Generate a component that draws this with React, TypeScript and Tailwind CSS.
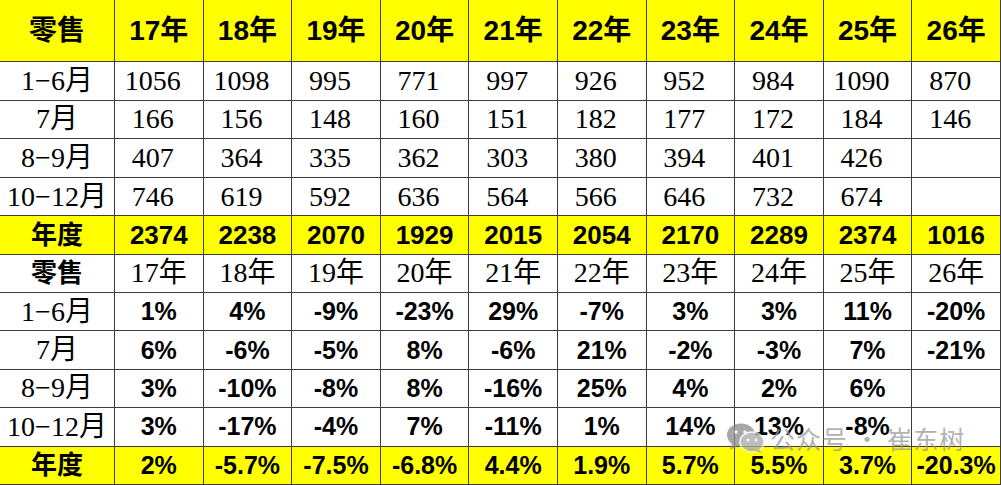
import React from 'react'

const years = ['17年', '18年', '19年', '20年', '21年', '22年', '23年', '24年', '25年', '26年']

const retail = [
  { label: '1−6月', values: ['1056', '1098', '995', '771', '997', '926', '952', '984', '1090', '870'] },
  { label: '7月', values: ['166', '156', '148', '160', '151', '182', '177', '172', '184', '146'] },
  { label: '8−9月', values: ['407', '364', '335', '362', '303', '380', '394', '401', '426', ''] },
  { label: '10−12月', values: ['746', '619', '592', '636', '564', '566', '646', '732', '674', ''] },
]
const retailTotal = ['2374', '2238', '2070', '1929', '2015', '2054', '2170', '2289', '2374', '1016']

const growth = [
  { label: '1−6月', values: ['1%', '4%', '-9%', '-23%', '29%', '-7%', '3%', '3%', '11%', '-20%'] },
  { label: '7月', values: ['6%', '-6%', '-5%', '8%', '-6%', '21%', '-2%', '-3%', '7%', '-21%'] },
  { label: '8−9月', values: ['3%', '-10%', '-8%', '8%', '-16%', '25%', '4%', '2%', '6%', ''] },
  { label: '10−12月', values: ['3%', '-17%', '-4%', '7%', '-11%', '1%', '14%', '13%', '-8%', ''] },
]
const growthTotal = ['2%', '-5.7%', '-7.5%', '-6.8%', '4.4%', '1.9%', '5.7%', '5.5%', '3.7%', '-20.3%']

const sans = "font-['Liberation_Sans','Noto_Sans_CJK_SC',sans-serif] font-bold"
const serif = "font-['Liberation_Serif','Noto_Sans_CJK_SC',serif]"
const cell = 'border border-[#3c3c3c] text-center align-middle p-0 whitespace-nowrap leading-none'

function WeChatMark() {
  return (
    <svg width="40" height="30" viewBox="0 0 40 30" className="shrink-0">
      <ellipse cx="15" cy="12" rx="14" ry="11.5" fill="#8a8a8a" />
      <path d="M6 21 L4 27 L11 23 Z" fill="#8a8a8a" />
      <ellipse cx="26" cy="19" rx="12" ry="10" fill="#a8a8a8" stroke="#f4f4f4" strokeWidth="1.5" />
      <path d="M33 26 L36 30 L29 28 Z" fill="#a8a8a8" />
      <circle cx="10" cy="9" r="1.8" fill="#f4f4f4" />
      <circle cx="19" cy="9" r="1.8" fill="#f4f4f4" />
      <circle cx="22" cy="17" r="1.5" fill="#f4f4f4" />
      <circle cx="30" cy="17" r="1.5" fill="#f4f4f4" />
    </svg>
  )
}

export default function App() {
  return (
    <div className="relative w-[1001px] h-[485px] overflow-hidden bg-white text-black">
      <table className="table-fixed border-collapse w-[1001px] -mt-px -ml-px">
        <colgroup>
          <col className="w-[115px]" />
          {years.map((y) => (
            <col key={y} className="w-[88.6px]" />
          ))}
        </colgroup>
        <tbody>
          {/* Header row */}
          <tr className="h-[62px] bg-[#ffff00]">
            <td className={`${cell} ${sans} text-[28px]`}>零售</td>
            {years.map((y) => (
              <td key={y} className={`${cell} ${sans} text-[28px]`}>{y}</td>
            ))}
          </tr>

          {/* Retail volumes */}
          {retail.map((row) => (
            <tr key={row.label} className="h-[38.6px] bg-white">
              <td className={`${cell} ${serif} text-[28px]`}>{row.label}</td>
              {row.values.map((v, i) => (
                <td key={i} className={`${cell} ${serif} text-[28px] pr-3`}>{v}</td>
              ))}
            </tr>
          ))}
          <tr className="h-[38.6px] bg-[#ffff00]">
            <td className={`${cell} ${sans} text-[26px]`}>年度</td>
            {retailTotal.map((v, i) => (
              <td key={i} className={`${cell} ${sans} text-[26px]`}>{v}</td>
            ))}
          </tr>

          {/* Growth header */}
          <tr className="h-[38px] bg-white">
            <td className={`${cell} ${sans} text-[26px]`}>零售</td>
            {years.map((y) => (
              <td key={y} className={`${cell} ${serif} text-[28px]`}>{y}</td>
            ))}
          </tr>

          {/* Growth rates */}
          {growth.map((row) => (
            <tr key={row.label} className="h-[38.4px] bg-white">
              <td className={`${cell} ${serif} text-[28px]`}>{row.label}</td>
              {row.values.map((v, i) => (
                <td key={i} className={`${cell} ${sans} text-[25px]`}>{v}</td>
              ))}
            </tr>
          ))}
          <tr className="h-[38.4px] bg-[#ffff00]">
            <td className={`${cell} ${sans} text-[26px]`}>年度</td>
            {growthTotal.map((v, i) => (
              <td key={i} className={`${cell} ${sans} text-[25px]`}>{v}</td>
            ))}
          </tr>
        </tbody>
      </table>

      {/* Watermark */}
      <div className="absolute left-[726px] top-[423px] flex items-center gap-1 opacity-75 pointer-events-none">
        <WeChatMark />
        <span className="font-['Noto_Sans_CJK_SC',sans-serif] text-[25px] leading-none text-[#999999] tracking-[1px]">
          公众号 · 崔东树
        </span>
      </div>
    </div>
  )
}
